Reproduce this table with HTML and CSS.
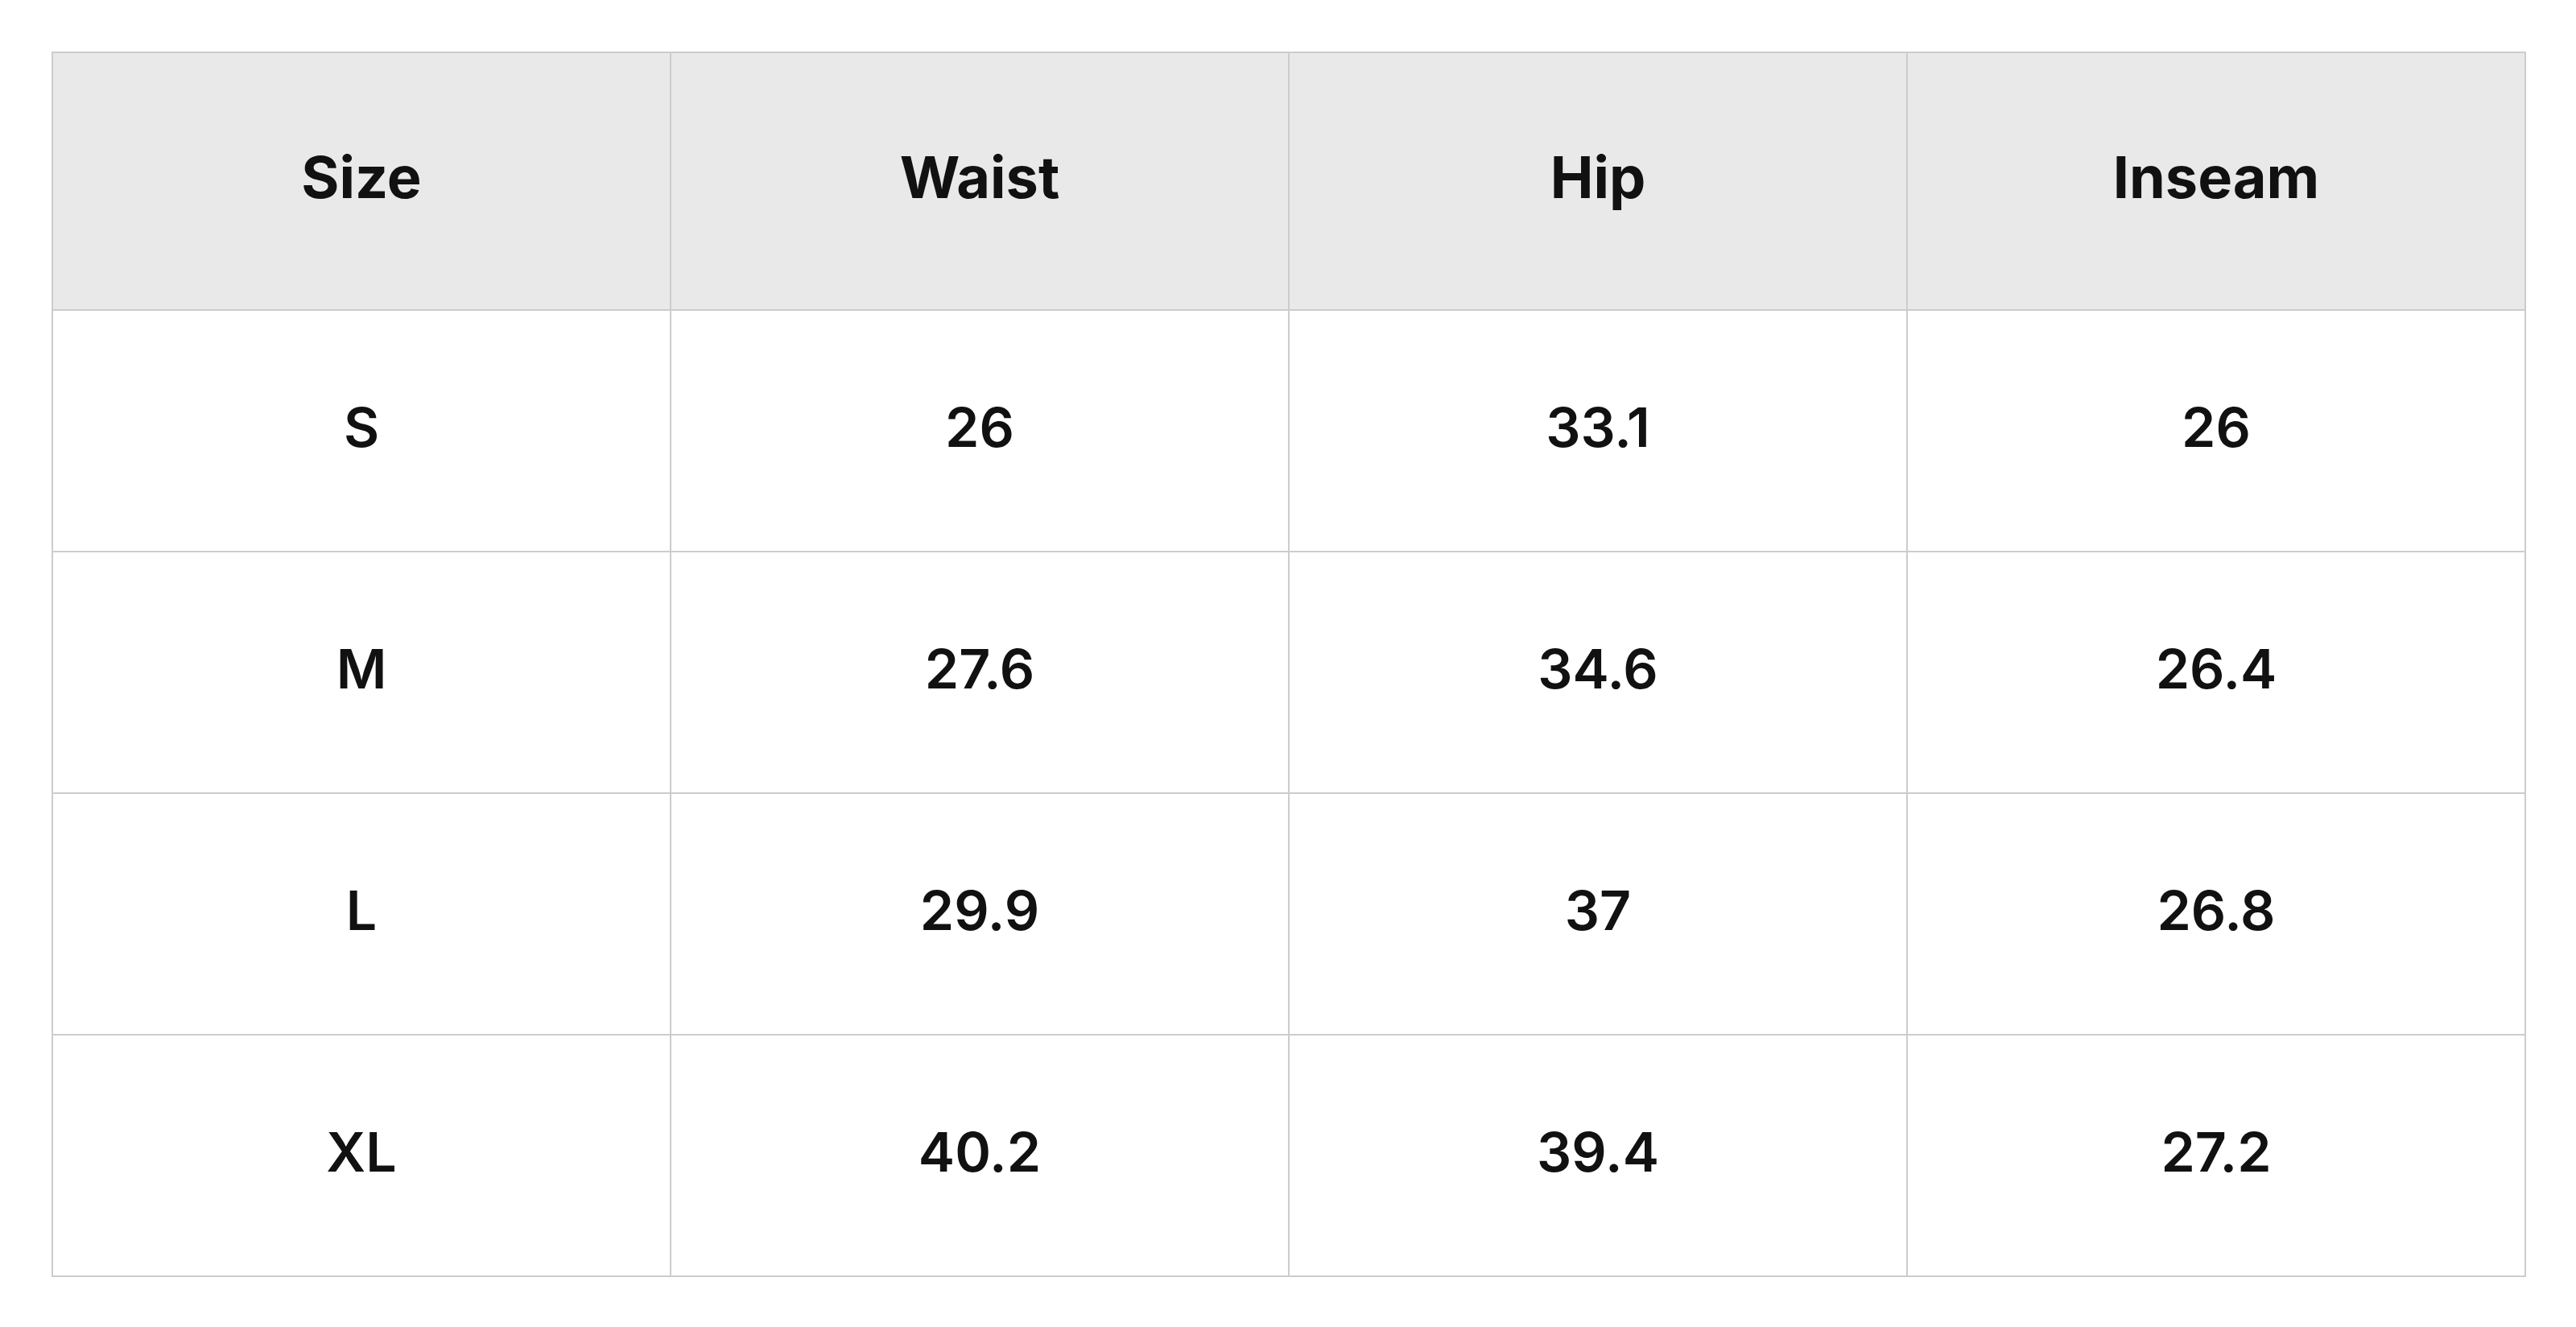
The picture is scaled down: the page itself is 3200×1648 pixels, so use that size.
FILE: index.html
```html
<!DOCTYPE html>
<html lang="en">
<head>
<meta charset="utf-8">
<title>Size chart</title>
<link rel="stylesheet" href="styles.css">
</head>
<body>
<div class="page">
  <table class="size-table">
    <thead>
      <tr><th>Size</th><th>Waist</th><th>Hip</th><th>Inseam</th></tr>
    </thead>
    <tbody>
      <tr><td>S</td><td>26</td><td>33.1</td><td>26</td></tr>
      <tr><td>M</td><td>27.6</td><td>34.6</td><td>26.4</td></tr>
      <tr><td>L</td><td>29.9</td><td>37</td><td>26.8</td></tr>
      <tr><td>XL</td><td>40.2</td><td>39.4</td><td>27.2</td></tr>
    </tbody>
  </table>
</div>
</body>
</html>
```
FILE: styles.css
```css
html, body {
  margin: 0;
  padding: 0;
  background: #ffffff;
}
.page {
  padding: 64px 0 0 64px;
}
.size-table {
  border-collapse: collapse;
  width: 3074px;
  table-layout: fixed;
  font-family: Inter, "Liberation Sans", sans-serif;
  color: #111111;
}
.size-table th,
.size-table td {
  border: 2px solid #cccccc;
  text-align: center;
  vertical-align: middle;
  padding: 0;
}
.size-table th {
  background: #e9e9e9;
  height: 306px;
  padding-bottom: 12px;
  font-size: 72px;
  font-weight: 700;
}
.size-table td {
  height: 288px;
  padding-bottom: 10px;
  font-size: 68px;
  font-weight: 600;
}
```
